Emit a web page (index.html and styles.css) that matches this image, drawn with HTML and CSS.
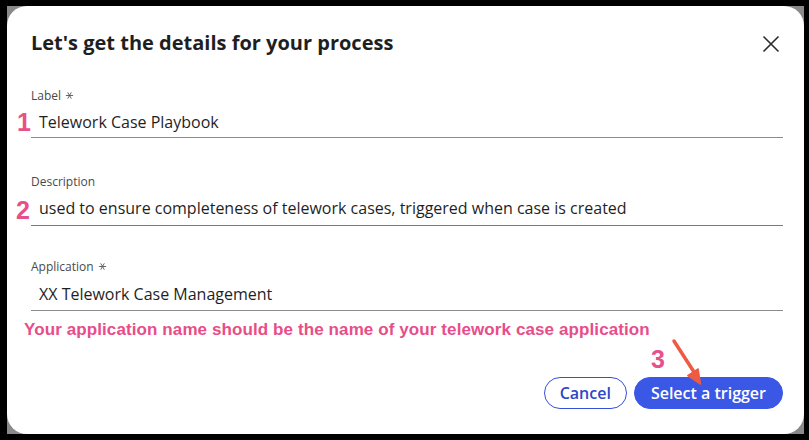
FILE: index.html
```html
<!DOCTYPE html>
<html lang="en">
<head>
<meta charset="utf-8">
<title>Process details</title>
<link rel="stylesheet" href="styles.css">
</head>
<body>
<div class="frame">
  <div class="modal">
    <div class="header">
      <h1 class="title">Let's get the details for your process</h1>
      <button class="close" aria-label="Close">
        <svg width="24" height="24" viewBox="0 0 24 24"><path d="M4.5 4.5 L19.5 19.5 M19.5 4.5 L4.5 19.5" stroke="#2b2b2b" stroke-width="1.6" fill="none"/></svg>
      </button>
    </div>

    <div class="field field-first">
      <div class="label">Label <svg class="req" width="9" height="9" viewBox="0 0 10 10"><path d="M1 5 H9 M3 1.5 L7 8.5 M7 1.5 L3 8.5" stroke="#555" stroke-width="1" fill="none"/></svg></div>
      <div class="value">Telework Case Playbook</div>
    </div>

    <div class="field field-desc">
      <div class="label">Description</div>
      <div class="value">used to ensure completeness of telework cases, triggered when case is created</div>
    </div>

    <div class="field field-app">
      <div class="label">Application <svg class="req" width="9" height="9" viewBox="0 0 10 10"><path d="M1 5 H9 M3 1.5 L7 8.5 M7 1.5 L3 8.5" stroke="#555" stroke-width="1" fill="none"/></svg></div>
      <div class="value">XX Telework Case Management</div>
    </div>

    <p class="note">Your application name should be the name of your telework case application</p>

    <div class="footer">
      <button class="btn btn-secondary">Cancel</button>
      <button class="btn btn-primary">Select a trigger</button>
    </div>

    <span class="step step-1">1</span>
    <span class="step step-2">2</span>
    <span class="step step-3">3</span>
    <svg class="arrow" width="44" height="56" viewBox="0 0 44 56">
      <path d="M7 5 L27 36" stroke="#ef5a42" stroke-width="3.5" stroke-linecap="round" fill="none"/>
      <path d="M33.5 48 L20.8 39.6 L31.1 33 Z" fill="#ef5a42" stroke="#ef5a42" stroke-width="1.5" stroke-linejoin="round"/>
    </svg>
  </div>
</div>
</body>
</html>
```

FILE: styles.css
```css
html, body {
  margin: 0;
}

body {
  background: #000;
  height: 440px;
  padding: 6px 5px 6px 7px;
  box-sizing: border-box;
  font-family: "Open Sans", "Liberation Sans", sans-serif;
  color: #1f1f1f;
}

.frame {
  background: #8a8a8a;
  width: 797px;
  height: 428px;
}

.modal {
  position: relative;
  background: #fff;
  border-radius: 20px;
  height: 100%;
  box-sizing: border-box;
  padding: 25px 21px 25px 24px;
  display: flex;
  flex-direction: column;
}

.header {
  display: flex;
  justify-content: space-between;
  align-items: center;
  height: 24px;
}

.title {
  margin: 0;
  font-size: 20px;
  line-height: 24px;
  font-weight: 700;
  color: #1f1f1f;
}

.close {
  width: 24px;
  height: 24px;
  padding: 0;
  margin-top: 2px;
  border: 0;
  background: none;
  display: block;
}

.close svg {
  display: block;
}

.field-first {
  margin-top: 33px;
}

.field-desc {
  margin-top: 36px;
}

.field-app {
  margin-top: 33px;
}

.label {
  font-size: 12px;
  line-height: 16px;
  color: #4a4a4a;
  margin-bottom: 6px;
}

.req {
  vertical-align: 0;
  margin-left: 1px;
}

.value {
  font-size: 16px;
  line-height: 24px;
  padding: 0 8px 3px;
  border-bottom: 1px solid #8a8a8a;
  color: #1f1f1f;
}

.field-desc .value {
  padding-bottom: 5px;
  border-bottom-color: #777b80;
}

.field-app .value {
  padding-top: 1px;
  padding-bottom: 4px;
}

.note {
  margin: 9px 0 0 -7px;
  font-family: "Liberation Sans", Arial, sans-serif;
  font-weight: 700;
  font-size: 17px;
  letter-spacing: 0.1px;
  line-height: 20px;
  color: #e84d89;
}

.footer {
  margin-top: auto;
  display: flex;
  justify-content: flex-end;
  gap: 7px;
}

.btn {
  height: 32px;
  border-radius: 16px;
  font-family: "Open Sans", sans-serif;
  font-size: 16px;
  font-weight: 600;
  padding: 0 15px;
  border: 1px solid #3550d8;
  cursor: pointer;
}

.btn-secondary {
  background: #fff;
  color: #2f47c8;
}

.btn-primary {
  background: #3a57e6;
  border-color: #3a57e6;
  color: #fff;
  padding: 0 16px;
}

.step {
  position: absolute;
  font-family: "Liberation Sans", Arial, sans-serif;
  font-weight: 700;
  font-size: 25px;
  line-height: 24px;
  color: #e8508a;
}

.step-1 {
  left: 10px;
  top: 104px;
}

.step-2 {
  left: 9px;
  top: 192px;
}

.step-3 {
  left: 644px;
  top: 341px;
}

.arrow {
  position: absolute;
  left: 660px;
  top: 330px;
}
```
